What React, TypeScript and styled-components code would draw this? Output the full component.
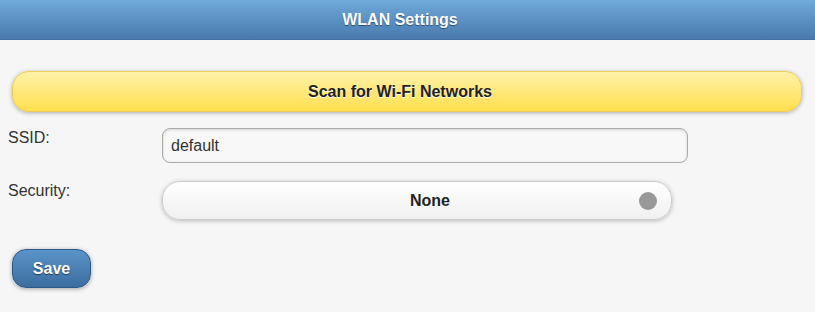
import React, { useState } from 'react';
import styled, { createGlobalStyle } from 'styled-components';

const GlobalStyle = createGlobalStyle`
  html, body {
    margin: 0;
    padding: 0;
    background: #f6f6f6;
    font-family: "Liberation Sans", Arial, Helvetica, sans-serif;
  }
`;

const Page = styled.div`
  width: 815px;
  height: 312px;
  background: #f6f6f6;
`;

const Header = styled.div`
  height: 40px;
  box-sizing: border-box;
  display: flex;
  align-items: center;
  justify-content: center;
  padding-right: 15px;
  background: linear-gradient(#6eaad9, #4a79ad);
  border-bottom: 1px solid #44719f;
`;

const Title = styled.h1`
  margin: 0;
  font-size: 16px;
  font-weight: bold;
  color: #fff;
  text-shadow: 0 1px 1px #2a4d74;
`;

const Content = styled.div`
  padding: 31px 13px 0 8px;
`;

const ScanButton = styled.button`
  display: block;
  width: calc(100% - 4px);
  margin-left: 4px;
  height: 41px;
  box-sizing: border-box;
  padding: 0 14px 0 0;
  border: 1px solid #efcb57;
  border-radius: 17px;
  background: linear-gradient(#fff2a9, #ffdf4e);
  box-shadow: 0 1px 4px rgba(0, 0, 0, 0.3);
  font-family: inherit;
  font-size: 16px;
  font-weight: bold;
  color: #222;
  text-shadow: 0 1px 0 #fff;
  cursor: pointer;
`;

const FieldRow = styled.div<{ $gap: number }>`
  display: grid;
  grid-template-columns: 154px 1fr;
  align-items: start;
  margin-top: ${p => p.$gap}px;
`;

const Label = styled.label`
  padding-top: 1px;
  font-size: 16px;
  color: #333;
`;

const TextInput = styled.input`
  width: 526px;
  height: 35px;
  box-sizing: border-box;
  padding: 0 8px;
  border: 1px solid #aaa;
  border-radius: 8px;
  background: #f8f8f8;
  box-shadow: inset 0 1px 3px rgba(0, 0, 0, 0.15);
  font-family: inherit;
  font-size: 16px;
  color: #333;
  outline: none;
`;

const SelectButton = styled.div`
  position: relative;
  width: 510px;
  height: 39px;
  box-sizing: border-box;
  display: flex;
  align-items: center;
  justify-content: center;
  padding: 0 14px 0 40px;
  border: 1px solid #ccc;
  border-radius: 18px;
  background: linear-gradient(#ffffff, #f0f0f0);
  box-shadow: 0 1px 4px rgba(0, 0, 0, 0.25);
  font-size: 16px;
  font-weight: bold;
  color: #222;
  text-shadow: 0 1px 0 #fff;
  cursor: pointer;
`;

const SelectIcon = styled.span`
  position: absolute;
  right: 14px;
  top: 50%;
  width: 18px;
  height: 18px;
  margin-top: -9px;
  border-radius: 50%;
  background: #999;
`;

const SaveButton = styled.button`
  display: block;
  margin: 29px 0 0 4px;
  width: 79px;
  height: 39px;
  box-sizing: border-box;
  border: 1px solid #2b5886;
  border-radius: 14px;
  background: linear-gradient(#5a94c8, #3c6d9f);
  box-shadow: 0 1px 4px rgba(0, 0, 0, 0.35);
  font-family: inherit;
  font-size: 16px;
  font-weight: bold;
  color: #fff;
  text-shadow: 0 1px 1px #1f3a5a;
  cursor: pointer;
`;

export default function App() {
  const [ssid, setSsid] = useState('default');

  return (
    <Page>
      <GlobalStyle />
      <Header>
        <Title>WLAN Settings</Title>
      </Header>
      <Content>
        <ScanButton>Scan for Wi-Fi Networks</ScanButton>
        <FieldRow $gap={16}>
          <Label htmlFor="ssid">SSID:</Label>
          <TextInput id="ssid" value={ssid} onChange={e => setSsid(e.target.value)} />
        </FieldRow>
        <FieldRow $gap={18}>
          <Label>Security:</Label>
          <SelectButton>
            None
            <SelectIcon />
          </SelectButton>
        </FieldRow>
        <SaveButton>Save</SaveButton>
      </Content>
    </Page>
  );
}
